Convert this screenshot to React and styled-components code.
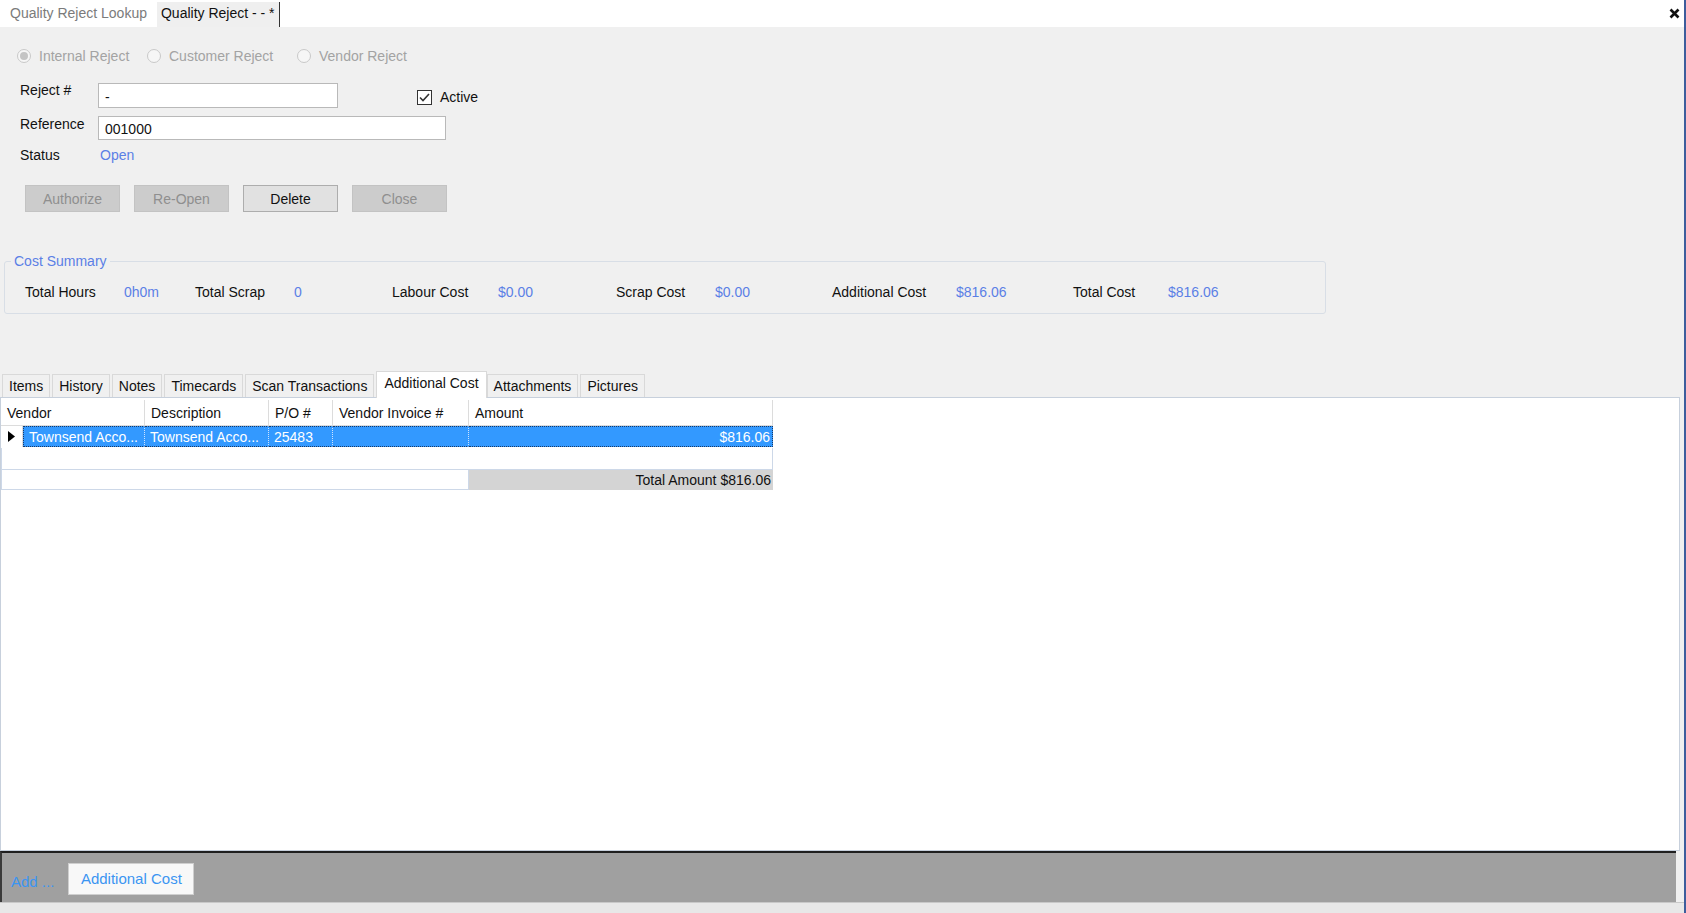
import { Fragment } from "react";
import styled, { createGlobalStyle } from "styled-components";

const GlobalStyle = createGlobalStyle`
  html, body { margin: 0; padding: 0; }
  body {
    font-family: "Liberation Sans", Arial, sans-serif;
    font-size: 14px;
    background: #f0f0f0;
    color: #111;
  }
`;

const Window = styled.div`
  width: 1686px;
  height: 913px;
  box-sizing: border-box;
  display: flex;
  flex-direction: column;
  background: #f0f0f0;
  border-right: 2px solid #3d5d9c;
  overflow: hidden;
`;

/* ---------- document tabs ---------- */
const DocStrip = styled.div`
  height: 27px;
  flex-shrink: 0;
  display: flex;
  align-items: stretch;
  background: #fff;
  padding-left: 6px;
`;

const DocTab = styled.div`
  display: flex;
  align-items: center;
  margin-left: ${(p) => (p.$active ? "6px" : "0")};
  padding: 0 4px 1px;
  color: ${(p) => (p.$active ? "#111" : "#7b7b7b")};
  background: ${(p) => (p.$active ? "#efefef" : "transparent")};
  border-right: ${(p) => (p.$active ? "1.5px solid #333" : "none")};
  margin-top: ${(p) => (p.$active ? "2px" : "0")};
  padding-bottom: ${(p) => (p.$active ? "3px" : "1px")};
`;

const CloseBtn = styled.div`
  margin-left: auto;
  width: 20px;
  display: flex;
  align-items: center;
  justify-content: center;
`;

/* ---------- header form ---------- */
const FormArea = styled.div`
  padding-left: 17px;
  flex-shrink: 0;
`;

const RadioRow = styled.div`
  display: flex;
  align-items: center;
  margin-top: 21px;
  height: 16px;
`;

const RadioItem = styled.div`
  width: ${(p) => p.$w}px;
  display: flex;
  align-items: center;
  gap: 8px;
  color: #a3a3a3;
`;

const RadioDot = styled.span`
  width: 14px;
  height: 14px;
  box-sizing: border-box;
  border-radius: 50%;
  border: 1px solid #c9c9c9;
  background: #f6f6f6;
  display: flex;
  align-items: center;
  justify-content: center;
  &::after {
    content: "";
    width: 8px;
    height: 8px;
    border-radius: 50%;
    background: ${(p) => (p.$checked ? "#c4c4c4" : "transparent")};
  }
`;

const FieldRow = styled.div`
  display: flex;
  align-items: flex-start;
  margin-top: ${(p) => p.$mt}px;
  padding-left: 3px;
`;

const Label = styled.div`
  width: 78px;
  line-height: 16px;
  margin-top: ${(p) => p.$mt || 0}px;
`;

const TextBox = styled.div`
  width: ${(p) => p.$w}px;
  height: ${(p) => p.$h}px;
  box-sizing: border-box;
  background: #fff;
  border: 1px solid #b9b9b9;
  padding: 2px 6px 0;
  display: flex;
  align-items: center;
`;

const CheckWrap = styled.label`
  display: flex;
  align-items: center;
  gap: 8px;
  margin-left: 79px;
  margin-top: 6px;
`;

const CheckBox = styled.span`
  width: 15px;
  height: 15px;
  box-sizing: border-box;
  border: 1px solid #333;
  background: #fff;
  display: flex;
  align-items: center;
  justify-content: center;
`;

const StatusValue = styled.div`
  color: #5b7fe6;
  line-height: 16px;
  margin-left: 2px;
`;

const ButtonRow = styled.div`
  display: flex;
  gap: 14px;
  margin-top: 22px;
  padding-left: 8px;
`;

const WinButton = styled.div`
  width: 95px;
  height: 27px;
  box-sizing: border-box;
  display: flex;
  align-items: center;
  justify-content: center;
  background: ${(p) => (p.$disabled ? "#cccccc" : "#e1e1e1")};
  border: 1px solid ${(p) => (p.$disabled ? "#c3c3c3" : "#adadad")};
  color: ${(p) => (p.$disabled ? "#8f8f8f" : "#111")};
`;

/* ---------- cost summary ---------- */
const GroupBox = styled.fieldset`
  margin: 41px 0 0 4px;
  width: 1322px;
  box-sizing: border-box;
  border: 1px solid #d8dee6;
  border-radius: 3px;
  padding: 15px 0 13px 20px;
  min-width: 0;
`;

const GroupLegend = styled.legend`
  color: #5b7fe6;
  padding: 0 3px;
  margin-left: -14px;
  line-height: 16px;
`;

const SummaryGrid = styled.div`
  display: grid;
  grid-template-columns: 99px 71px 99px 98px 106px 118px 99px 117px 124px 117px 95px 1fr;
  line-height: 16px;
`;

const SumValue = styled.div`
  color: #5b7fe6;
`;

/* ---------- tabs ---------- */
const TabStrip = styled.div`
  display: flex;
  align-items: flex-end;
  height: 27px;
  margin-top: 56px;
  padding-left: 2px;
  flex-shrink: 0;
`;

const Tab = styled.div`
  height: ${(p) => (p.$active ? 27 : 23)}px;
  box-sizing: border-box;
  display: flex;
  align-items: center;
  padding: 0 ${(p) => (p.$active ? 7 : 6)}px;
  padding-bottom: ${(p) => (p.$active ? 4 : 0)}px;
  background: ${(p) => (p.$active ? "#fff" : "#f0f0f0")};
  border: 1px solid #d9d9d9;
  border-bottom: none;
  margin: 0 ${(p) => (p.$active ? 0 : 2)}px ${(p) => (p.$active ? -1 : 0)}px 0;
  position: relative;
  z-index: ${(p) => (p.$active ? 1 : 0)};
`;

const Panel = styled.div`
  flex: 1;
  background: #fff;
  border: 1px solid #c7d0dc;
  margin-right: 4px;
  padding: 2px 0 0 0;
  min-height: 0;
`;

/* ---------- data grid ---------- */
const DataGrid = styled.div`
  display: grid;
  grid-template-columns: 22px 122px 124px 64px 136px 304px;
  width: 772px;
`;

const HeadCell = styled.div`
  grid-column: span ${(p) => p.$span || 1};
  height: 26px;
  box-sizing: border-box;
  display: flex;
  align-items: center;
  padding-left: 6px;
  background: #fff;
  border-right: 1px solid #dcdcdc;
  border-bottom: 1px solid #dcdcdc;
`;

const RowHeader = styled.div`
  height: 21px;
  display: flex;
  align-items: center;
  padding-left: 7px;
  background: #fff;
  border-right: 1px solid #dcdcdc;
`;

const SelCell = styled.div`
  height: 21px;
  box-sizing: border-box;
  display: flex;
  align-items: center;
  justify-content: ${(p) => (p.$right ? "flex-end" : "flex-start")};
  padding: 0 2px 0 5px;
  background: #3399ff;
  color: #fff;
  white-space: nowrap;
  overflow: hidden;
  border-top: 1px dotted #1a3a66;
  border-bottom: 1px dotted #1a3a66;
  border-right: 1px dotted ${(p) => (p.$last ? "#1a3a66" : "#cfe4ff")};
  border-left: ${(p) => (p.$first ? "1px dotted #1a3a66" : "none")};
`;

const EmptyRow = styled.div`
  grid-column: 1 / -1;
  height: 22px;
  box-sizing: border-box;
  border: 1px solid #cdd8e8;
  border-top: none;
  margin-top: 1px;
`;

const TotalBlank = styled.div`
  grid-column: 1 / 6;
  height: 20px;
  box-sizing: border-box;
  border: 1px solid #cdd8e8;
  border-top: none;
`;

const TotalCell = styled.div`
  height: 20px;
  display: flex;
  align-items: center;
  justify-content: flex-end;
  padding-right: 2px;
  background: #d4d4d4;
`;

/* ---------- bottom bar ---------- */
const BottomBar = styled.div`
  height: 51px;
  flex-shrink: 0;
  box-sizing: border-box;
  display: flex;
  align-items: center;
  background: #a0a0a0;
  border-top: 2px solid #1f1f1f;
  border-left: 2px solid #3a3a3a;
  margin-right: 8px;
  padding-left: 9px;
  gap: 14px;
  font-size: 15px;
`;

const AddLabel = styled.span`
  color: #3b95f2;
  margin-top: 8px;
`;

const AddButton = styled.div`
  width: 126px;
  height: 32px;
  box-sizing: border-box;
  display: flex;
  align-items: center;
  justify-content: center;
  background: #f8f8f8;
  border: 1px solid #cfcfcf;
  color: #3b95f2;
  margin-top: 2px;
`;

const FooterStrip = styled.div`
  height: 10px;
  flex-shrink: 0;
  background: #e8e8e8;
  border-top: 1px solid #c9c9c9;
`;

const tabs = [
  "Items",
  "History",
  "Notes",
  "Timecards",
  "Scan Transactions",
  "Additional Cost",
  "Attachments",
  "Pictures",
];

const summary = [
  ["Total Hours", "0h0m"],
  ["Total Scrap", "0"],
  ["Labour Cost", "$0.00"],
  ["Scrap Cost", "$0.00"],
  ["Additional Cost", "$816.06"],
  ["Total Cost", "$816.06"],
];

export default function App() {
  return (
    <>
      <GlobalStyle />
      <Window>
        <DocStrip>
          <DocTab>Quality Reject Lookup</DocTab>
          <DocTab $active>Quality Reject - - *</DocTab>
          <CloseBtn>
            <svg width="11" height="11" viewBox="0 0 11 11">
              <path d="M1.5 1.5 L9.5 9.5 M9.5 1.5 L1.5 9.5" stroke="#111" strokeWidth="2.6" />
            </svg>
          </CloseBtn>
        </DocStrip>

        <FormArea>
          <RadioRow>
            <RadioItem $w={130}>
              <RadioDot $checked />
              Internal Reject
            </RadioItem>
            <RadioItem $w={150}>
              <RadioDot />
              Customer Reject
            </RadioItem>
            <RadioItem $w={150}>
              <RadioDot />
              Vendor Reject
            </RadioItem>
          </RadioRow>

          <FieldRow $mt={19}>
            <Label $mt={-1}>Reject #</Label>
            <TextBox $w={240} $h={25}>-</TextBox>
            <CheckWrap>
              <CheckBox>
                <svg width="11" height="9" viewBox="0 0 11 9">
                  <path d="M1 4.5 L4 7.5 L10 1" fill="none" stroke="#333" strokeWidth="1.6" />
                </svg>
              </CheckBox>
              Active
            </CheckWrap>
          </FieldRow>

          <FieldRow $mt={8}>
            <Label>Reference</Label>
            <TextBox $w={348} $h={24}>001000</TextBox>
          </FieldRow>

          <FieldRow $mt={7}>
            <Label>Status</Label>
            <StatusValue>Open</StatusValue>
          </FieldRow>

          <ButtonRow>
            <WinButton $disabled>Authorize</WinButton>
            <WinButton $disabled>Re-Open</WinButton>
            <WinButton>Delete</WinButton>
            <WinButton $disabled>Close</WinButton>
          </ButtonRow>
        </FormArea>

        <GroupBox>
          <GroupLegend>Cost Summary</GroupLegend>
          <SummaryGrid>
            {summary.map(([label, value]) => (
              <Fragment key={label}>
                <div>{label}</div>
                <SumValue>{value}</SumValue>
              </Fragment>
            ))}
          </SummaryGrid>
        </GroupBox>

        <TabStrip>
          {tabs.map((t) => (
            <Tab key={t} $active={t === "Additional Cost"}>
              {t}
            </Tab>
          ))}
        </TabStrip>

        <Panel>
          <DataGrid>
            <HeadCell $span={2}>Vendor</HeadCell>
            <HeadCell>Description</HeadCell>
            <HeadCell>P/O #</HeadCell>
            <HeadCell>Vendor Invoice #</HeadCell>
            <HeadCell>Amount</HeadCell>

            <RowHeader>
              <svg width="7" height="11" viewBox="0 0 7 11">
                <path d="M0 0 L7 5.5 L0 11 Z" fill="#000" />
              </svg>
            </RowHeader>
            <SelCell $first>Townsend Acco...</SelCell>
            <SelCell>Townsend Acco...</SelCell>
            <SelCell>25483</SelCell>
            <SelCell></SelCell>
            <SelCell $right $last>$816.06</SelCell>

            <EmptyRow />
            <TotalBlank />
            <TotalCell>Total Amount $816.06</TotalCell>
          </DataGrid>
        </Panel>

        <BottomBar>
          <AddLabel>Add ...</AddLabel>
          <AddButton>Additional Cost</AddButton>
        </BottomBar>
        <FooterStrip />
      </Window>
    </>
  );
}
